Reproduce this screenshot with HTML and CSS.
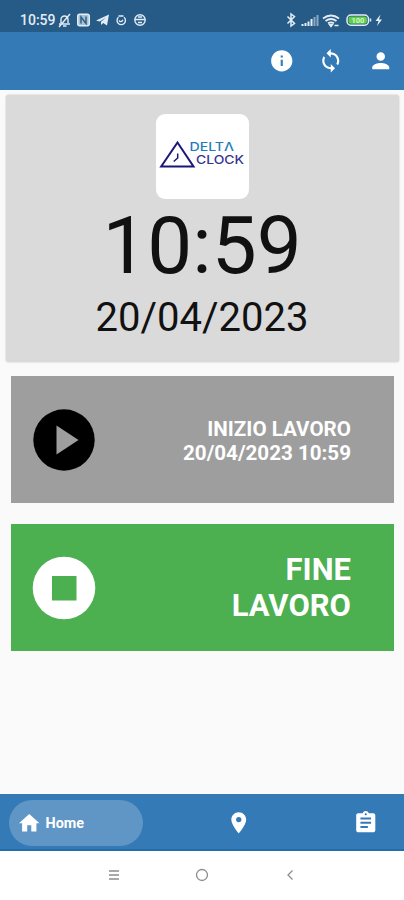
FILE: index.html
```
<!DOCTYPE html>
<html lang="it">
<head>
<meta charset="utf-8">
<title>Delta Clock</title>
<link rel="stylesheet" href="styles.css">
</head>
<body>
<div class="status">
  <span class="status-time">10:59</span>
  <svg class="status-left" viewBox="0 0 92 16" width="92" height="16" fill="none" stroke="#e3edf5" stroke-width="1.4">
    <path d="M2 12h11M4 11V7.500a3.500 3.500 0 0 1 7 0V11M6 14h3.500M2 15L13 2"/>
    <rect x="20.700" y="2.200" width="11.600" height="11.600" rx="2" fill="#a9c0d2"/>
    <path d="M24 11.500V5l5 6.500V4.500" stroke="#275b87"/>
    <path d="M39 8.500L52 2.500L50 13.500L46.200 11L44 13V9.800L49 5.500L42.700 9.600Z" fill="#e3edf5" stroke="none"/>
    <path d="M61.500 5.300a4.200 4.200 0 1 0 5.500 0M61.500 4h5M62 8.500q2 2.500 4-.5"/>
    <circle cx="83" cy="8" r="5.200"/>
    <path d="M78 7.500h10M81 10.500h4M81 5h4"/>
  </svg>
  <svg class="status-right" viewBox="0 0 100 16" width="100" height="16" fill="none" stroke="#e3edf5" stroke-width="1.500">
    <path d="M1.500 4.500l7 7L5 14V2l3.500 2.500l-7 7"/>
    <path d="M16.500 14v-2M19.500 14v-3M22.500 14V9.500M25.500 14V7" stroke-width="2"/>
    <path d="M28.500 14V5M31.500 14V3" stroke="#8ba9c0" stroke-width="2"/>
    <path d="M37 6.500q8-6 16 0M39.500 9q5.500-4 11 0M42 11.300q3-2 6 0" stroke-width="1.800"/>
    <path d="M45 14.500l-1.500-2h3zM48.500 13.500h4" fill="#e3edf5"/>
    <rect x="61" y="3" width="21.500" height="10.200" rx="4"/>
    <rect x="62.500" y="4.500" width="18.500" height="7.200" rx="2.500" fill="#5fce45" stroke="none"/>
    <text x="65.500" y="11" class="battery-text">100</text>
    <path d="M84.500 6.500v3"/>
    <path d="M94.500 2.500L89.500 9h3l-1.500 5L96 7.500h-3z" fill="#e3edf5" stroke="none"/>
  </svg>
</div>
<header class="appbar">
  <svg class="icon" viewBox="0 0 24 24"><path d="M12 2C6.480 2 2 6.480 2 12s4.480 10 10 10 10-4.480 10-10S17.520 2 12 2zm1 15h-2v-6h2v6zm0-8h-2V7h2v2z"/></svg>
  <svg class="icon" viewBox="0 0 24 24"><path d="M12 4V1L8 5l4 4V6c3.310 0 6 2.690 6 6 0 1.010-.25 1.970-.7 2.800l1.460 1.460C19.540 15.030 20 13.570 20 12c0-4.420-3.580-8-8-8zm0 14c-3.310 0-6-2.690-6-6 0-1.010.25-1.970.7-2.800L5.240 7.740C4.460 8.970 4 10.430 4 12c0 4.420 3.580 8 8 8v3l4-4-4-4v3z"/></svg>
  <svg class="icon person" viewBox="0 0 24 24"><path d="M12 12c2.210 0 4-1.790 4-4s-1.790-4-4-4-4 1.790-4 4 1.790 4 4 4zm0 2c-2.670 0-8 1.340-8 4v2h16v-2c0-2.660-5.330-4-8-4z"/></svg>
</header>
<main class="content">
  <section class="card">
    <svg class="logo" viewBox="0 0 93 85" width="93" height="85">
      <path d="M21.500 28.500L37.500 52.500H5.200Z" fill="none" stroke="#1b1679" stroke-width="2"/>
      <path d="M21.700 39.500v4.500l-4 3.500" fill="none" stroke="#1b1679" stroke-width="1.500"/>
      <text class="logo-text delta" x="33.500" y="36.500" textLength="44.500" lengthAdjust="spacingAndGlyphs">DELTΛ</text>
      <text class="logo-text clock" x="40" y="50" textLength="48" lengthAdjust="spacingAndGlyphs">CLOCK</text>
    </svg>
    <div class="time">10:59</div>
    <div class="date">20/04/2023</div>
  </section>
  <div class="action start">
    <svg class="round" viewBox="0 0 64 64"><circle cx="32" cy="32" r="30.700"/><path d="M24.500 17.500V46.500L46.500 32Z" fill="#9e9e9e"/></svg>
    <div class="label">INIZIO LAVORO<br>20/04/2023 10:59</div>
  </div>
  <div class="action stop">
    <svg class="round" viewBox="0 0 64 64"><circle cx="32" cy="32" r="31.300" fill="#fff"/><path d="M20 20h24.500v24.500H20z" fill="#4caf50"/></svg>
    <div class="label">FINE<br>LAVORO</div>
  </div>
</main>
<nav class="tabs">
  <div class="tab-home">
    <svg class="icon home" viewBox="0 0 24 24"><path d="M10 20v-6h4v6h5v-8h3L12 3 2 12h3v8z"/></svg>
    <span>Home</span>
  </div>
  <svg class="icon pin" viewBox="0 0 24 24"><path d="M12 2C8.130 2 5 5.130 5 9c0 5.250 7 13 7 13s7-7.750 7-13c0-3.870-3.130-7-7-7zm0 9.500a2.500 2.500 0 0 1 0-5 2.500 2.500 0 0 1 0 5z"/></svg>
  <svg class="icon clip" viewBox="0 0 24 24"><path d="M19 3h-4.180C14.400 1.840 13.300 1 12 1s-2.400.84-2.820 2H5c-1.100 0-2 .9-2 2v14c0 1.100.9 2 2 2h14c1.100 0 2-.9 2-2V5c0-1.100-.9-2-2-2zm-7 0c.55 0 1 .45 1 1s-.45 1-1 1-1-.45-1-1 .45-1 1-1zm2 14H7v-2h7v2zm3-4H7v-2h10v2zm0-4H7V7h10v2z"/></svg>
</nav>
<div class="sysnav">
  <svg viewBox="0 0 14 14" width="14" height="14"><path d="M2 3h10M2 7h10M2 11h10"/></svg>
  <svg viewBox="0 0 14 14" width="14" height="14"><circle cx="7" cy="7" r="5.500"/></svg>
  <svg viewBox="0 0 14 14" width="14" height="14"><path d="M9.500 2.500L5 7l4.500 4.500"/></svg>
</div>
</body>
</html>
```
FILE: styles.css
```
* { box-sizing: border-box; }
body {
  margin: 0;
  width: 404px;
  height: 900px;
  display: flex;
  flex-direction: column;
  overflow: hidden;
  background: #fafafa;
  font-family: Roboto, sans-serif;
}
svg { display: block; flex: none; }
.status {
  height: 32px;
  flex: none;
  display: flex;
  align-items: center;
  padding: 8px 18px 0 20px;
  background: #275b87;
  color: #e3edf5;
}
.status-time { font-size: 14px; font-weight: 500; width: 37px; white-space: nowrap; }
.status-right { margin-left: auto; }
.battery-text { font-size: 7.5px; font-weight: 700; fill: #d9f5d2; stroke: none; }
.appbar {
  height: 57.5px;
  flex: none;
  display: flex;
  align-items: center;
  justify-content: flex-end;
  gap: 24px;
  padding-right: 11px;
  background: #337ab7;
}
.icon { width: 25.5px; height: 25.5px; fill: #fff; }
.content { flex: 1; padding: 5.5px 5px 0; }
.card {
  height: 267px;
  margin: 0 0.5px;
  padding-top: 19px;
  display: flex;
  flex-direction: column;
  align-items: center;
  border-radius: 3px;
  background: #dadada;
  box-shadow: 0 0 2px rgba(0, 0, 0, .25);
  color: #111;
}
.logo { background: #fff; border-radius: 9px; }
.logo-text { font-family: Inter, sans-serif; font-size: 11.5px; font-weight: 500; }
.delta { fill: #217db8; }
.clock { fill: #3a3590; }
.time { font-size: 80px; line-height: 94px; }
.date { font-size: 40px; line-height: 47px; margin-top: 1px; }
.action {
  height: 127px;
  margin: 21px 5px 0 6px;
  padding: 0 43px 0 21px;
  display: flex;
  align-items: center;
  justify-content: space-between;
  color: #fff;
  font-weight: 700;
  text-align: right;
}
.start { margin-top: 14.4px; background: #9e9e9e; font-size: 20.6px; line-height: 24px; }
.start .label { padding-top: 2px; }
.stop { background: #4caf50; font-size: 31px; line-height: 36px; }
.stop .label { padding-top: 1px; }
.round { width: 64px; height: 64px; }
.tabs {
  height: 57px;
  flex: none;
  display: flex;
  align-items: center;
  padding: 2px 26px 0 9px;
  background: #337ab7;
  border-bottom: 2px solid #246dab;
}
.tab-home {
  width: 134px;
  height: 46px;
  padding: 1px 0 0 8px;
  display: flex;
  align-items: center;
  gap: 4px;
  border-radius: 23px;
  background: #6096c6;
  color: #fff;
  font-size: 14.4px;
  font-weight: 700;
}
.home { width: 24.5px; height: 24.5px; }
.pin { margin-left: 83px; }
.clip { margin-left: auto; }
.sysnav {
  height: 49px;
  flex: none;
  display: flex;
  align-items: center;
  justify-content: center;
  gap: 74px;
  padding-bottom: 1px;
  background: #fff;
}
.sysnav svg { fill: none; stroke: #8d8d8d; stroke-width: 1.300; }
```
